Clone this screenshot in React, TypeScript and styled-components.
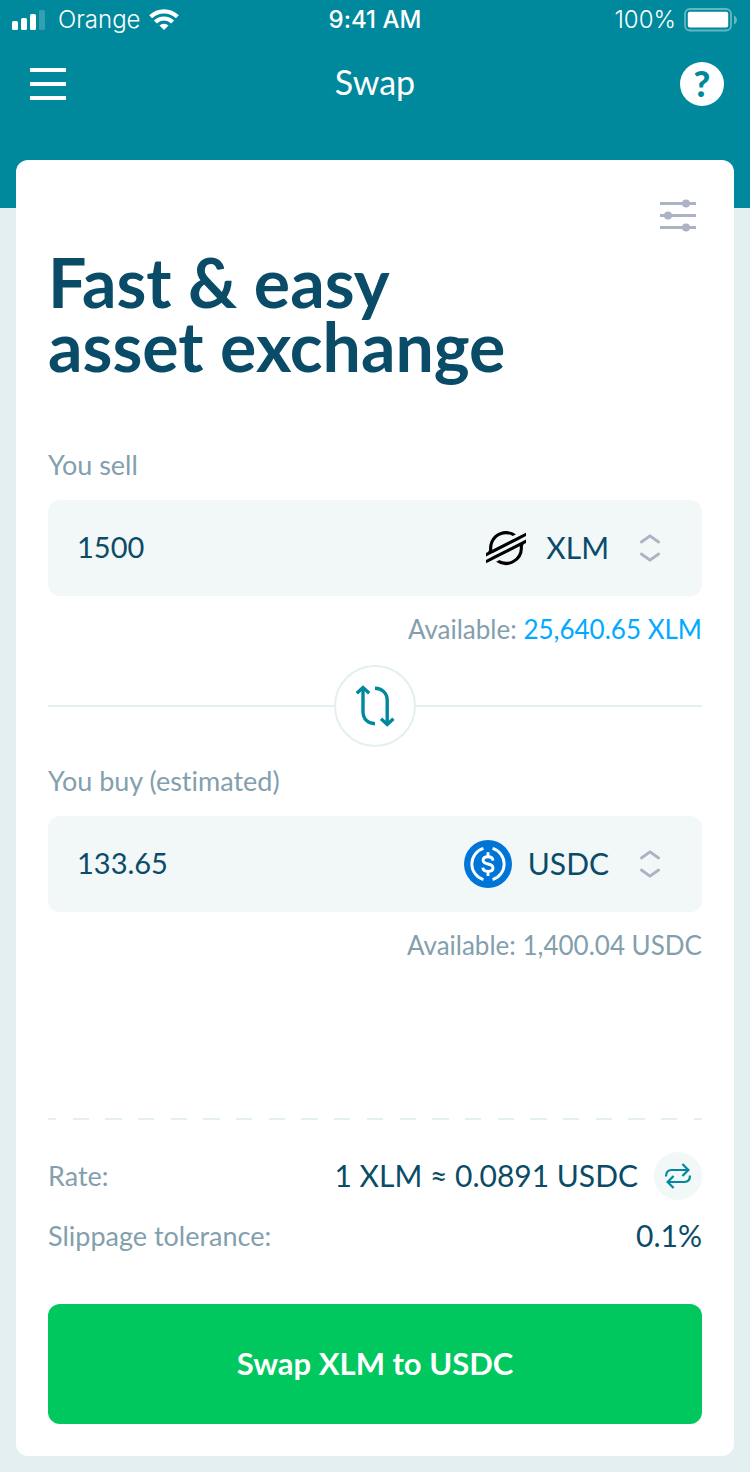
import React, { useState } from 'react';
import styled, { createGlobalStyle } from 'styled-components';
import { SiStellar } from 'react-icons/si';

const color = {
  teal: '#00889d',
  page: '#e4eff1',
  field: '#f2f7f8',
  ink: '#0a4c68',
  muted: '#839fae',
  icon: '#acb3c4',
  link: '#00aaff',
  green: '#00c75e',
};

const GlobalStyle = createGlobalStyle`
  *, *::before, *::after { box-sizing: border-box; }
  body {
    margin: 0;
    background: ${color.page};
    color: ${color.ink};
    font-family: Lato, "Liberation Sans", sans-serif;
    font-variant-ligatures: none;
  }
  button, input, select { font: inherit; color: inherit; }
  svg { display: block; flex: none; overflow: visible; }
`;

const Page = styled.div`
  min-height: 100vh;
  display: flex;
  flex-direction: column;
`;

const Header = styled.header`
  background: ${color.teal};
  color: #fff;
  padding-bottom: 100px;
`;

const StatusBar = styled.div`
  height: 40px;
  padding: 0 12px;
  display: grid;
  grid-template-columns: 1fr auto 1fr;
  align-items: center;
  font-family: Inter, "Liberation Sans", sans-serif;
  font-size: 24px;
  line-height: 40px;
`;

const StatusGroup = styled.div<{ $end?: boolean }>`
  display: flex;
  align-items: center;
  gap: 8px;
  justify-content: ${(p) => (p.$end ? 'flex-end' : 'flex-start')};
  font-weight: 300;
`;

const Clock = styled.time`
  font-weight: 500;
`;

const Nav = styled.nav`
  display: flex;
  align-items: center;
  justify-content: space-between;
  padding: 20px 24px 0;
`;

const Title = styled.h1`
  margin: 0;
  padding-bottom: 4px;
  font-size: 34px;
  line-height: 44px;
  font-weight: 400;
`;

const IconButton = styled.button`
  width: 48px;
  height: 48px;
  padding: 0;
  border: 0;
  background: none;
  display: grid;
  place-items: center;
  cursor: pointer;
`;

const HelpDisc = styled.span`
  width: 44px;
  height: 44px;
  border-radius: 50%;
  background: #fff;
  color: ${color.teal};
  font-size: 36px;
  line-height: 42px;
  font-weight: 900;
  text-align: center;
`;

const Card = styled.main`
  flex: 1;
  display: flex;
  flex-direction: column;
  margin: -48px 16px 16px;
  padding: 32px;
  background: #fff;
  border-radius: 12px;
`;

const Toolbar = styled.div`
  display: flex;
  justify-content: flex-end;
`;

const Headline = styled.h2`
  margin: 10px 0 71px;
  font-size: 68px;
  line-height: 64px;
  font-weight: 700;
`;

const Label = styled.label`
  display: block;
  margin-bottom: 19px;
  font-size: 27px;
  line-height: 32px;
  color: ${color.muted};
`;

const Field = styled.div`
  height: 96px;
  padding: 0 30px 0 29px;
  display: flex;
  align-items: center;
  background: ${color.field};
  border-radius: 12px;
`;

const Amount = styled.input`
  flex: 1;
  min-width: 0;
  padding: 0 0 2px;
  border: 0;
  outline: 0;
  background: none;
  font-size: 29px;
  line-height: 40px;
`;

const Asset = styled.div`
  position: relative;
  display: flex;
  align-items: center;
  gap: 16px;
`;

const AssetIcon = styled.span`
  width: 48px;
  display: grid;
  place-items: center;
`;

const AssetSelect = styled.select`
  appearance: none;
  field-sizing: content;
  border: 0;
  outline: 0;
  padding: 0 63px 2px 0;
  background: none;
  font-size: 30px;
  line-height: 40px;
  cursor: pointer;
`;

const Chevrons = styled.svg`
  position: absolute;
  right: 11px;
  pointer-events: none;
`;

const Available = styled.p`
  margin: 17px 0 0;
  font-size: 26px;
  line-height: 32px;
  text-align: right;
  color: ${color.muted};
`;

const MaxLink = styled.a`
  color: ${color.link};
  text-decoration: none;
`;

const Divider = styled.div`
  display: flex;
  align-items: center;
  margin: 20px 0 18px;

  &::before,
  &::after {
    content: '';
    flex: 1;
    height: 2px;
    background: ${color.page};
  }
`;

const FlipButton = styled.button`
  width: 82px;
  height: 82px;
  padding: 0;
  display: grid;
  place-items: center;
  border: 2px solid ${color.page};
  border-radius: 50%;
  background: #fff;
  color: ${color.teal};
  cursor: pointer;
`;

const Summary = styled.section`
  margin-top: auto;
`;

const DashedRule = styled.hr`
  height: 2px;
  margin: 0 0 32px;
  border: 0;
  background: repeating-linear-gradient(
    to right,
    ${color.page} 0 1.25%,
    transparent 1.25% 3.75%,
    ${color.page} 3.75% 5%
  );
`;

const Details = styled.dl`
  margin: 0 0 44px;
  display: grid;
  gap: 12px;
`;

const DetailRow = styled.div`
  display: flex;
  align-items: center;
  justify-content: space-between;
  height: 48px;
`;

const Term = styled.dt`
  padding-bottom: 2px;
  font-size: 27px;
  color: ${color.muted};
`;

const Value = styled.dd`
  margin: 0;
  display: flex;
  align-items: center;
  gap: 16px;
  font-size: 30px;
`;

const Figure = styled.span`
  padding-bottom: 2px;
`;

const RoundButton = styled(IconButton)`
  border-radius: 50%;
  background: ${color.field};
  color: ${color.teal};
`;

const SubmitButton = styled.button`
  width: 100%;
  height: 120px;
  padding: 0 0 2px;
  border: 0;
  border-radius: 12px;
  background: ${color.green};
  color: #fff;
  font-size: 31px;
  font-weight: 700;
  cursor: pointer;
`;

const SignalIcon = () => (
  <svg width="38" height="20" viewBox="0 0 38 20" fill="#fff" aria-hidden="true">
    <rect x="0" y="11" width="6" height="9" rx="1.6" />
    <rect x="9" y="8" width="6" height="12" rx="1.6" />
    <rect x="18" y="4" width="6" height="16" rx="1.6" />
    <rect x="27" y="0" width="6" height="20" rx="1.6" opacity="0.2" />
  </svg>
);

const WifiIcon = () => (
  <svg width="30" height="20" viewBox="0 0 30 20" aria-hidden="true">
    <g fill="none" stroke="#fff" strokeWidth="4.2">
      <path d="M1.6 6.8 A19.2 19.2 0 0 1 28.4 6.8" />
      <path d="M6.4 12 A12.3 12.3 0 0 1 23.6 12" />
    </g>
    <path d="M15 20 L10.4 15.6 A6.7 6.7 0 0 1 19.6 15.6 Z" fill="#fff" />
  </svg>
);

const BatteryIcon = () => (
  <svg width="54" height="24" viewBox="0 0 54 24" aria-hidden="true">
    <rect x="1" y="1" width="46" height="21.5" rx="5" fill="none" stroke="#fff" strokeWidth="1.8" opacity="0.4" />
    <rect x="3.8" y="3.8" width="40.4" height="15.8" rx="2" fill="#fff" />
    <path d="M50 7.5 C53.8 9 53.8 15 50 16.5 Z" fill="#fff" opacity="0.4" />
  </svg>
);

const MenuIcon = () => (
  <svg width="36" height="32" viewBox="0 0 36 32" fill="#fff" aria-hidden="true">
    <rect width="36" height="4" />
    <rect y="14" width="36" height="4" />
    <rect y="28" width="36" height="4" />
  </svg>
);

const SlidersIcon = () => (
  <svg width="36" height="32" viewBox="0 0 36 32" fill={color.icon} aria-hidden="true">
    <rect y="2" width="36" height="3" />
    <rect y="14" width="36" height="3" />
    <rect y="26" width="36" height="3" />
    <circle cx="26" cy="3.5" r="4" />
    <circle cx="8" cy="15.5" r="4" />
    <circle cx="26" cy="27.5" r="4" />
  </svg>
);

const UsdcIcon = () => (
  <svg width="48" height="48" viewBox="0 0 48 48" aria-hidden="true">
    <circle cx="24" cy="24" r="24" fill="#0075d8" />
    <g fill="none" stroke="#fff" strokeWidth="2.9">
      <path d="M19.4 8.4 A16.3 16.3 0 0 0 19.4 39.6" />
      <path d="M28.6 8.4 A16.3 16.3 0 0 1 28.6 39.6" />
      <path d="M29 20.6 C28.8 17.9 27 16.7 24 16.7 C21 16.7 19.1 18 19.1 20.2 C19.1 22.6 21 23.3 24 24 C27.1 24.7 29 25.5 29 28 C29 30.2 27 31.4 24 31.4 C21 31.4 19 30.2 18.8 27.6" />
      <path d="M24 12.2 V17 M24 31 V36" />
    </g>
  </svg>
);

const FlipIcon = () => (
  <svg width="40" height="42" viewBox="0 0 40 42" fill="none" stroke="currentColor" strokeWidth="3.4" aria-hidden="true">
    <path d="M1.8 8.2 L8 2.6 L14.2 8.2" />
    <path d="M8 3 V26.5 C8 34 13 38.6 20 38.8" />
    <path d="M20 3.2 C27 3.4 32.2 8 32.2 15.5 V39" />
    <path d="M26 33.8 L32.2 39.4 L38.4 33.8" />
  </svg>
);

const InvertIcon = () => (
  <svg width="28" height="28" viewBox="0 0 28 28" fill="none" stroke="currentColor" strokeWidth="2.2" aria-hidden="true">
    <path d="M2 14.4 C2 10.4 4 8 7.6 8 H24" />
    <path d="M18.4 2 L24.4 8 L18.4 14" />
    <path d="M26 13.6 C26 17.6 24 20 20.4 20 H4" />
    <path d="M9.6 14 L3.6 20 L9.6 26" />
  </svg>
);

const assetIcons: Record<string, React.ReactNode> = {
  XLM: <SiStellar size={40} color="#000" aria-hidden="true" />,
  USDC: <UsdcIcon />,
};

interface AssetFieldProps {
  id: string;
  label: string;
  amount: string;
  asset: string;
  onAmount: (value: string) => void;
  onAsset: (value: string) => void;
}

const AssetField = ({ id, label, amount, asset, onAmount, onAsset }: AssetFieldProps) => (
  <>
    <Label htmlFor={id}>{label}</Label>
    <Field>
      <Amount id={id} inputMode="decimal" value={amount} onChange={(e) => onAmount(e.target.value)} />
      <Asset>
        <AssetIcon>{assetIcons[asset]}</AssetIcon>
        <AssetSelect aria-label={`${label} asset`} value={asset} onChange={(e) => onAsset(e.target.value)}>
          <option>XLM</option>
          <option>USDC</option>
        </AssetSelect>
        <Chevrons width="22" height="28" viewBox="0 0 22 28" fill="none" stroke={color.icon} strokeWidth="2.8" strokeLinecap="round" strokeLinejoin="round" aria-hidden="true">
          <path d="M2.4 8 L11 1.8 L19.6 8" />
          <path d="M2.4 20 L11 26.2 L19.6 20" />
        </Chevrons>
      </Asset>
    </Field>
  </>
);

export default function App() {
  const [sell, setSell] = useState({ amount: '1500', asset: 'XLM' });
  const [buy, setBuy] = useState({ amount: '133.65', asset: 'USDC' });

  const flip = () => {
    setSell(buy);
    setBuy(sell);
  };

  return (
    <>
      <GlobalStyle />
      <Page>
        <Header>
          <StatusBar>
            <StatusGroup>
              <SignalIcon />
              <span>Orange</span>
              <WifiIcon />
            </StatusGroup>
            <Clock>9:41 AM</Clock>
            <StatusGroup $end>
              <span>100%</span>
              <BatteryIcon />
            </StatusGroup>
          </StatusBar>
          <Nav>
            <IconButton type="button" aria-label="Menu">
              <MenuIcon />
            </IconButton>
            <Title>Swap</Title>
            <IconButton type="button" aria-label="Help">
              <HelpDisc>?</HelpDisc>
            </IconButton>
          </Nav>
        </Header>

        <Card>
          <Toolbar>
            <IconButton type="button" aria-label="Swap settings">
              <SlidersIcon />
            </IconButton>
          </Toolbar>
          <Headline>
            Fast &amp; easy
            <br />
            asset exchange
          </Headline>

          <AssetField
            id="sell"
            label="You sell"
            {...sell}
            onAmount={(amount) => setSell({ ...sell, amount })}
            onAsset={(asset) => setSell({ ...sell, asset })}
          />
          <Available>
            Available: <MaxLink href="#sell">25,640.65 XLM</MaxLink>
          </Available>

          <Divider>
            <FlipButton type="button" aria-label="Switch assets" onClick={flip}>
              <FlipIcon />
            </FlipButton>
          </Divider>

          <AssetField
            id="buy"
            label="You buy (estimated)"
            {...buy}
            onAmount={(amount) => setBuy({ ...buy, amount })}
            onAsset={(asset) => setBuy({ ...buy, asset })}
          />
          <Available>Available: 1,400.04 USDC</Available>

          <Summary>
            <DashedRule />
            <Details>
              <DetailRow>
                <Term>Rate:</Term>
                <Value>
                  <Figure>1 XLM ≈ 0.0891 USDC</Figure>
                  <RoundButton type="button" aria-label="Invert rate">
                    <InvertIcon />
                  </RoundButton>
                </Value>
              </DetailRow>
              <DetailRow>
                <Term>Slippage tolerance:</Term>
                <Value>
                  <Figure>0.1%</Figure>
                </Value>
              </DetailRow>
            </Details>
            <SubmitButton type="button">Swap XLM to USDC</SubmitButton>
          </Summary>
        </Card>
      </Page>
    </>
  );
}
